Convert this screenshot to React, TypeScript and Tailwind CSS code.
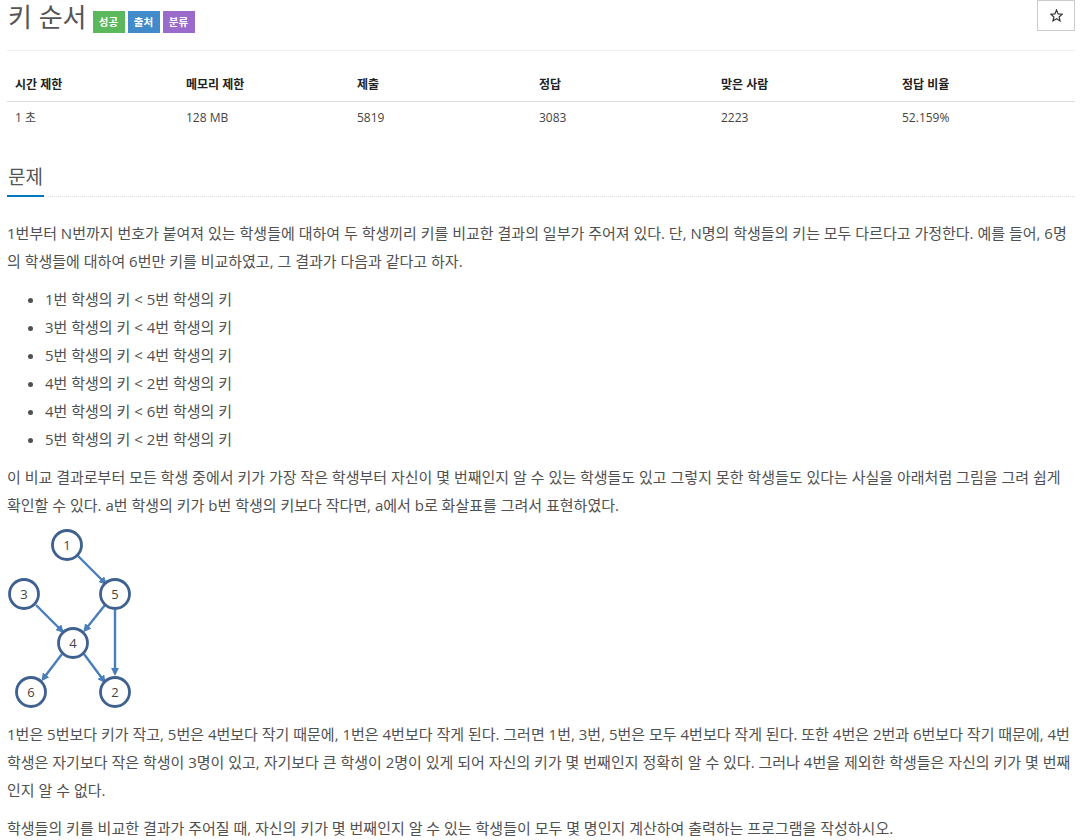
const stats = [
  { label: "시간 제한", value: "1 초", width: "w-[171px]" },
  { label: "메모리 제한", value: "128 MB", width: "w-[171px]" },
  { label: "제출", value: "5819", width: "w-[182px]" },
  { label: "정답", value: "3083", width: "w-[182px]" },
  { label: "맞은 사람", value: "2223", width: "w-[181px]" },
  { label: "정답 비율", value: "52.159%", width: "w-[181px]" },
];

const heights = [
  "1번 학생의 키 < 5번 학생의 키",
  "3번 학생의 키 < 4번 학생의 키",
  "5번 학생의 키 < 4번 학생의 키",
  "4번 학생의 키 < 2번 학생의 키",
  "4번 학생의 키 < 6번 학생의 키",
  "5번 학생의 키 < 2번 학생의 키",
];

function Label({ text, color }: { text: string; color: string }) {
  return (
    <span className={`flex h-[22px] w-8 items-center justify-center text-[10.5px] font-bold text-white ${color}`}>
      {text}
    </span>
  );
}

function Graph() {
  const nodes = [
    { n: "1", x: 60, y: 18 },
    { n: "3", x: 17, y: 67 },
    { n: "5", x: 108, y: 67 },
    { n: "4", x: 66, y: 116 },
    { n: "6", x: 24, y: 165 },
    { n: "2", x: 108, y: 165 },
  ];
  const edges = [
    [71, 29, 98, 56],
    [29, 78, 55, 104],
    [98, 78, 78, 103],
    [108, 83, 108, 146],
    [55, 127, 36, 152],
    [77, 127, 97, 154],
  ];
  return (
    <svg width="130" height="184" viewBox="0 0 130 184" className="block">
      <defs>
        <marker id="arrow" markerWidth="3.4" markerHeight="3.4" refX="2.2" refY="1.7" orient="auto">
          <path d="M0 0L3.4 1.7L0 3.4Z" fill="#4a7ebb" />
        </marker>
      </defs>
      {edges.map((e, i) => (
        <line key={i} x1={e[0]} y1={e[1]} x2={e[2]} y2={e[3]} stroke="#4a7ebb" strokeWidth="2.4" markerEnd="url(#arrow)" />
      ))}
      {nodes.map((c) => (
        <g key={c.n}>
          <circle cx={c.x} cy={c.y} r="14.5" fill="#fff" stroke="#3e6190" strokeWidth="2.8" />
          <text x={c.x} y={c.y + 4.5} textAnchor="middle" fontSize="13" fill="#444">
            {c.n}
          </text>
        </g>
      ))}
    </svg>
  );
}

export default function App() {
  return (
    <div className="h-[840px] overflow-hidden bg-white pl-[7px] pr-2 text-[15px] leading-[28px] text-[#505050] [font-family:'Open_Sans','Noto_Sans_CJK_KR',sans-serif]">
      <div className="flex h-[51px] items-start justify-between border-b border-[#eee]">
        <div className="flex items-start">
          <h1 className="ml-px text-[26px] leading-[34px] font-normal text-[#555]">키 순서</h1>
          <div className="mt-[11px] ml-[6px] flex gap-[3px]">
            <Label text="성공" color="bg-[#5cb85c]" />
            <Label text="출처" color="bg-[#428bca]" />
            <Label text="분류" color="bg-[#9b6bcc]" />
          </div>
        </div>
        <button className="flex h-[31px] w-[38px] items-center justify-center border border-[#ccc] bg-white">
          <svg width="13" height="13" viewBox="0 0 24 24" fill="none" stroke="#333" strokeWidth="2.2">
            <path d="M12 2l3 7 7.500.7-5.700 5 1.700 7.300-6.500-3.900L5.500 22l1.700-7.300-5.700-5L9 9z" />
          </svg>
        </button>
      </div>

      <table className="mt-[19px] w-full border-collapse text-[12px]">
        <thead>
          <tr className="h-[31px] border-b border-[#ddd]">
            {stats.map((s) => (
              <th key={s.label} className={`${s.width} px-2 text-left font-bold text-[#222]`}>
                {s.label}
              </th>
            ))}
          </tr>
        </thead>
        <tbody>
          <tr className="h-[32px]">
            {stats.map((s) => (
              <td key={s.label} className="px-2 pt-[2px] text-[#444]">
                {s.value}
              </td>
            ))}
          </tr>
        </tbody>
      </table>

      <div className="mt-[26px] h-[38px] border-b border-dotted border-[#ddd]">
        <h2 className="inline-block h-[38px] border-b-[2px] border-[#0076c0] px-px text-[19px] leading-[36px] font-normal text-[#555]">
          문제
        </h2>
      </div>

      <div className="pt-[22px]">
        <p>
          1번부터 N번까지 번호가 붙여져 있는 학생들에 대하여 두 학생끼리 키를 비교한 결과의 일부가 주어져 있다. 단, N명의 학생들의 키는 모두 다르다고 가정한다. 예를 들어, 6명의 학생들에 대하여 6번만 키를 비교하였고, 그 결과가 다음과 같다고 하자.
        </p>
        <ul className="my-[10px] list-disc pl-[38px]">
          {heights.map((h) => (
            <li key={h}>{h}</li>
          ))}
        </ul>
        <p>
          이 비교 결과로부터 모든 학생 중에서 키가 가장 작은 학생부터 자신이 몇 번째인지 알 수 있는 학생들도 있고 그렇지 못한 학생들도 있다는 사실을 아래처럼 그림을 그려 쉽게 확인할 수 있다. a번 학생의 키가 b번 학생의 키보다 작다면, a에서 b로 화살표를 그려서 표현하였다.
        </p>
        <div className="mt-[8px] mb-[9px]">
          <Graph />
        </div>
        <p>
          1번은 5번보다 키가 작고, 5번은 4번보다 작기 때문에, 1번은 4번보다 작게 된다. 그러면 1번, 3번, 5번은 모두 4번보다 작게 된다. 또한 4번은 2번과 6번보다 작기 때문에, 4번 학생은 자기보다 작은 학생이 3명이 있고, 자기보다 큰 학생이 2명이 있게 되어 자신의 키가 몇 번째인지 정확히 알 수 있다. 그러나 4번을 제외한 학생들은 자신의 키가 몇 번째인지 알 수 없다.
        </p>
        <p className="mt-[10px]">학생들의 키를 비교한 결과가 주어질 때, 자신의 키가 몇 번째인지 알 수 있는 학생들이 모두 몇 명인지 계산하여 출력하는 프로그램을 작성하시오.</p>
      </div>
    </div>
  );
}
